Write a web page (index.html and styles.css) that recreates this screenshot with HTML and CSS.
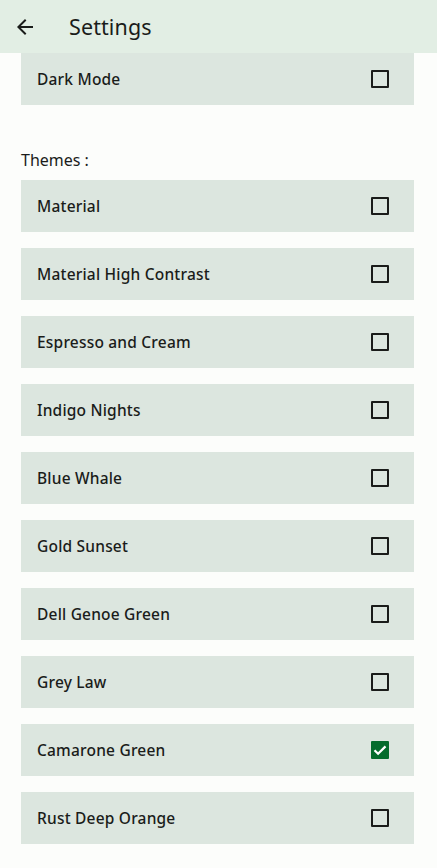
FILE: index.html
```html
<!DOCTYPE html>
<html lang="en">

<head>
    <meta charset="UTF-8" />
    <meta name="viewport" content="width=device-width, initial-scale=1.0" />
    <title>Settings</title>
    <link rel="stylesheet" href="styles.css">
</head>

<body>
    <header class="top-bar">
        <button class="back" aria-label="Back">
            <svg width="24" height="24" viewBox="0 0 24 24">
                <path d="M20 11H7.83l5.59-5.59L12 4l-8 8 8 8 1.41-1.41L7.83 13H20v-2z" fill="#1a1c1a" />
            </svg>
        </button>
        <h1>Settings</h1>
    </header>

    <main class="content">
        <div class="option">
            <span>Dark Mode</span>
            <span class="box"></span>
        </div>

        <p class="label">Themes :</p>

        <div class="themes">
            <div class="option"><span>Material</span><span class="box"></span></div>
            <div class="option"><span>Material High Contrast</span><span class="box"></span></div>
            <div class="option"><span>Espresso and Cream</span><span class="box"></span></div>
            <div class="option"><span>Indigo Nights</span><span class="box"></span></div>
            <div class="option"><span>Blue Whale</span><span class="box"></span></div>
            <div class="option"><span>Gold Sunset</span><span class="box"></span></div>
            <div class="option"><span>Dell Genoe Green</span><span class="box"></span></div>
            <div class="option"><span>Grey Law</span><span class="box"></span></div>
            <div class="option">
                <span>Camarone Green</span>
                <span class="box checked">
                    <svg width="18" height="18" viewBox="0 0 18 18">
                        <path d="M3.5 9.2l3.6 3.6 7.4-7.4" fill="none" stroke="#fff" stroke-width="2.2" />
                    </svg>
                </span>
            </div>
            <div class="option"><span>Rust Deep Orange</span><span class="box"></span></div>
        </div>
    </main>
</body>

</html>
```

FILE: styles.css
```css
body,
html {
    margin: 0;
    padding: 0;
    background: #fcfdfb;
    font-family: "Noto Sans", sans-serif;
    color: #1a1c1a;
}

.top-bar {
    height: 53px;
    display: flex;
    align-items: center;
    background: #e2eee4;
}

.back {
    width: 24px;
    height: 24px;
    margin-left: 13px;
    padding: 0;
    border: none;
    background: none;
    display: flex;
}

.top-bar h1 {
    margin: 0 0 0 32px;
    font-size: 21.5px;
    font-weight: 400;
    letter-spacing: 0.1px;
}

.content {
    padding: 0 23px 0 21px;
}

.option {
    height: 52px;
    display: flex;
    align-items: center;
    justify-content: space-between;
    padding: 0 25px 0 16px;
    background: #dce6df;
    font-size: 15.5px;
    font-weight: 500;
    letter-spacing: 0.2px;
}

.box {
    width: 14px;
    height: 14px;
    border: 2px solid #1a1c1a;
    border-radius: 1px;
    display: flex;
}

.box.checked {
    width: 18px;
    height: 18px;
    border: none;
    background: #046c2c;
}

.label {
    margin: 43px 0 8px;
    font-size: 16px;
    line-height: 24px;
}

.themes {
    display: flex;
    flex-direction: column;
    gap: 16px;
}
```
